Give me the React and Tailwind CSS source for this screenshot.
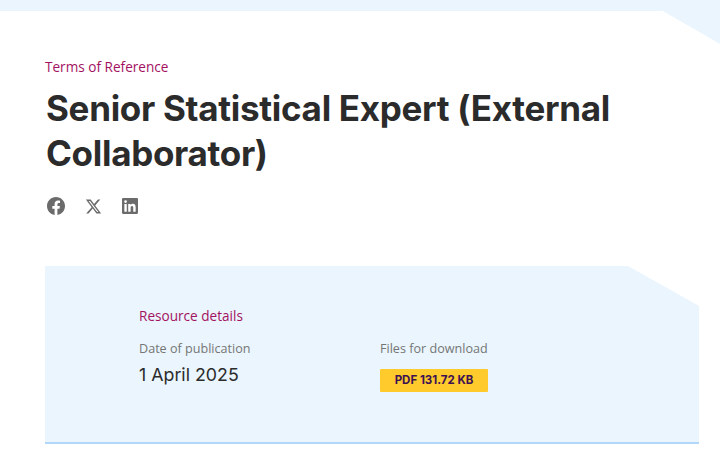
import React from 'react';

const FacebookIcon = () => (
  <svg viewBox="0 0 24 24" className="w-[18px] h-[18px] fill-current">
    <path d="M24 12.07C24 5.4 18.63 0 12 0S0 5.4 0 12.07c0 6.03 4.39 11.02 10.13 11.93v-8.44H7.08v-3.49h3.05V9.41c0-3.02 1.79-4.69 4.53-4.69 1.31 0 2.69.24 2.69.24v2.97h-1.51c-1.49 0-1.96.93-1.96 1.89v2.25h3.33l-.53 3.49h-2.8V24C19.61 23.09 24 18.1 24 12.07z" />
  </svg>
);

const XIcon = () => (
  <svg viewBox="0 0 24 24" className="w-[17px] h-[17px] fill-current">
    <path d="M18.24 2.25h3.31l-7.23 8.26 8.5 11.24H16.17l-5.21-6.82-5.97 6.82H1.68l7.73-8.84L1.25 2.25H8.08l4.71 6.23 5.45-6.23zm-1.16 17.52h1.83L7.08 4.13H5.12l11.96 15.64z" />
  </svg>
);

const LinkedinIcon = () => (
  <svg viewBox="0 0 24 24" className="w-[16px] h-[16px] fill-current">
    <path d="M22.23 0H1.77C.79 0 0 .77 0 1.73v20.54C0 23.23.79 24 1.77 24h20.46c.98 0 1.77-.77 1.77-1.73V1.73C24 .77 23.21 0 22.23 0zM7.12 20.45H3.56V9h3.56v11.45zM5.34 7.43a2.06 2.06 0 1 1 0-4.12 2.06 2.06 0 0 1 0 4.12zm15.11 13.02h-3.55v-5.57c0-1.33-.03-3.04-1.85-3.04-1.85 0-2.14 1.45-2.14 2.94v5.67H9.35V9h3.41v1.56h.05c.48-.9 1.64-1.85 3.37-1.85 3.6 0 4.27 2.37 4.27 5.45v6.29z" />
  </svg>
);

const App = () => {
  return (
    <div className="h-[467px] overflow-hidden bg-[#eaf5fe] pt-[11px] font-['Open_Sans',sans-serif]">
      <div className="h-[456px] bg-white px-[45px] pt-[46px] [clip-path:polygon(0_0,663px_0,720px_33px,720px_100%,0_100%)]">
        <p className="text-[13.6px] leading-[20px] text-[#a3125f]">Terms of Reference</p>
        <h1 className="mt-[9px] ml-[1px] w-[600px] text-[35px] leading-[45px] font-bold text-[#2b2b2b] font-['Inter',sans-serif] tracking-[-0.3px]">
          Senior Statistical Expert (External Collaborator)
        </h1>
        <div className="mt-[21px] flex items-center text-[#6b6b6b]">
          <a className="ml-[2px]"><FacebookIcon /></a>
          <a className="ml-[20px]"><XIcon /></a>
          <a className="ml-[20px]"><LinkedinIcon /></a>
        </div>

        <section className="mt-[51px] h-[178px] w-[654px] border-b-2 border-[#b3d6fb] bg-[#eaf5fe] pl-[94px] pt-[40px] [clip-path:polygon(0_0,583px_0,654px_40px,654px_100%,0_100%)]">
          <h2 className="text-[13.6px] leading-[20px] text-[#a3125f]">Resource details</h2>
          <div className="mt-[14px] flex">
            <div className="w-[241px]">
              <p className="text-[12.6px] leading-[18px] text-[#757575]">Date of publication</p>
              <p className="mt-[4px] text-[17.8px] leading-[26px] font-normal text-[#2b2b2b] font-['Inter',sans-serif]">1 April 2025</p>
            </div>
            <div>
              <p className="text-[12.6px] leading-[18px] text-[#757575]">Files for download</p>
              <a className="mt-[11px] flex h-[23px] w-[108px] items-center justify-center rounded-[1px] bg-[#ffca2b] text-[11.5px] font-bold text-[#3d1152] font-['Inter',sans-serif]">
                PDF 131.72 KB
              </a>
            </div>
          </div>
        </section>
      </div>
    </div>
  );
};

export default App;
